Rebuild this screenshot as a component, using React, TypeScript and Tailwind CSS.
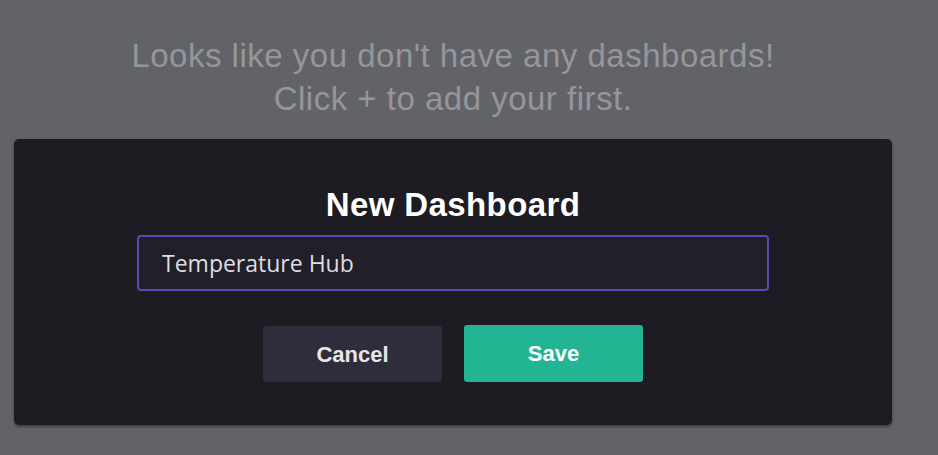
import React from "react";

function NewDashboardModal() {
    return (
        <div className="mx-[14px] mt-[19px] h-[286px] rounded-[5px] bg-[#1d1c22] shadow-[0_2px_3px_rgba(0,0,0,0.35)] flex flex-col items-center pt-[46px]">
            <h2 className="text-[33px] leading-[40px] font-bold text-white tracking-[0.4px] font-['Liberation_Sans',Arial,sans-serif]">
                New Dashboard
            </h2>
            <div className="mt-[10px] w-[632px] h-[56px] rounded-[4px] border-2 border-[#5a48b3] bg-[#211f28] flex items-center px-[23px]">
                <span className="text-[23px] text-[#dedde2] font-['Open_Sans',sans-serif]">
                    Temperature Hub
                </span>
            </div>
            <div className="mt-[35px] flex gap-[22px] font-['Liberation_Sans',Arial,sans-serif]">
                <button className="w-[179px] h-[56px] rounded-[3px] bg-[#2f2d3b] text-[#e6e6ea] text-[22px] font-bold">
                    Cancel
                </button>
                <button className="w-[179px] h-[57px] -mt-px rounded-[3px] bg-[#23b494] text-white text-[22px] font-bold">
                    Save
                </button>
            </div>
        </div>
    );
}

export default function App() {
    return (
        <div className="w-[938px] h-[455px] bg-[#626368] overflow-hidden">
            <div className="w-[906px] flex flex-col pt-[34px]">
                <div className="text-center text-[#95969b] text-[33px] leading-[43px] tracking-[0.5px] font-['Liberation_Sans',Arial,sans-serif]">
                    <p>Looks like you don't have any dashboards!</p>
                    <p>Click + to add your first.</p>
                </div>
                <NewDashboardModal/>
            </div>
        </div>
    );
}
